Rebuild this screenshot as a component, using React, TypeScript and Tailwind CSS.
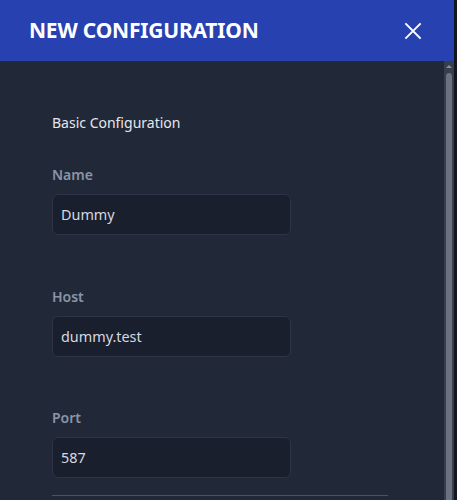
import React from "react";

const font = { fontFamily: '"Noto Sans", "Open Sans", sans-serif' };

function Field({ label, value, mt }: { label: string; value: string; mt: string }) {
  return (
    <div className={`flex flex-col ${mt}`}>
      <div className="h-[20px] text-[14px] leading-[20px] font-semibold text-[#8a94a6]">{label}</div>
      <div className="mt-[9px] flex h-[41px] w-[239px] items-center rounded-[6px] border border-[#2c3445] bg-[#1a1f2d] pl-[8px] text-[14.4px] text-[#d5d9e0]">
        {value}
      </div>
    </div>
  );
}

export default function App() {
  return (
    <div className="flex h-[500px] w-[457px] overflow-hidden bg-[#13161d]" style={font}>
      <div className="flex w-[454px] flex-col">
        <div className="flex h-[61px] shrink-0 items-center justify-between bg-[#2741b0] pl-[29px] pr-[32px]">
          <div className="text-[21px] font-bold tracking-[-0.2px] text-white">NEW CONFIGURATION</div>
          <svg width="18" height="18" viewBox="0 0 18 18" className="text-white">
            <path d="M2 2 L16 16 M16 2 L2 16" stroke="currentColor" strokeWidth="1.8" strokeLinecap="square" />
          </svg>
        </div>
        <div className="flex flex-1 bg-[#212939]">
          <div className="flex flex-1 flex-col pl-[52px] pt-[52px]">
            <div className="h-[20px] text-[14px] leading-[20px] text-[#e4e7ec]">Basic Configuration</div>
            <Field label="Name" value="Dummy" mt="mt-[32px]" />
            <Field label="Host" value="dummy.test" mt="mt-[52px]" />
            <Field label="Port" value="587" mt="mt-[51px]" />
            <div className="mt-[17px] h-[1px] w-[336px] bg-[#4b5366]" />
          </div>
          <div className="flex w-[10px] flex-col items-center bg-[#363d4b]">
            <div className="mt-[4px] h-0 w-0 border-x-[3px] border-b-[3px] border-x-transparent border-b-[#8a909c]" />
            <div className="mt-[5px] w-[6px] flex-1 rounded-t-[3px] bg-[#6b7180]" />
          </div>
        </div>
      </div>
      <div className="w-[3px] bg-[#13161d]" />
    </div>
  );
}
